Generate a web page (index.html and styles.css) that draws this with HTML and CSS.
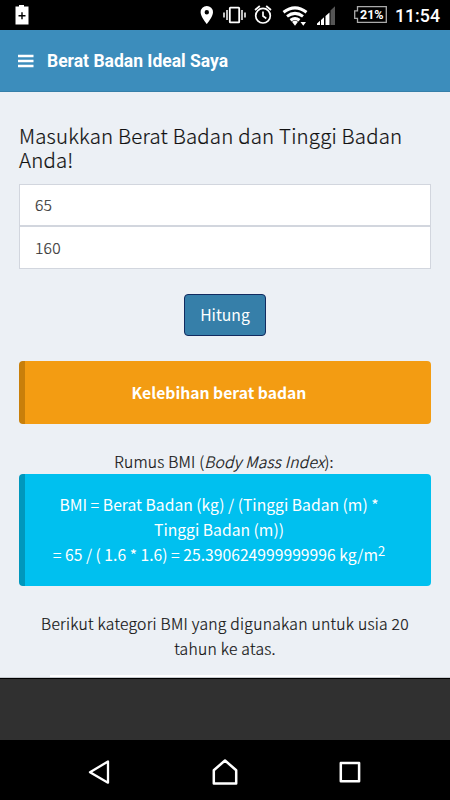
FILE: index.html
```html
<!DOCTYPE html>
<html lang="id">
<head>
    <meta charset="UTF-8">
    <meta name="viewport" content="width=device-width, initial-scale=1.0">
    <title>Berat Badan Ideal Saya</title>
    <link rel="stylesheet" href="styles.css">
</head>
<body>
    <div class="status-bar">
        <svg class="icon-saver" width="14" height="20" viewBox="0 0 14 20">
            <path fill="#fff" d="M4 0h5v1.500h4.500v18H.5v-18H4z"/>
            <path stroke="#000" stroke-width="1.400" d="M3.500 10.700h7M7 7.200v7"/>
        </svg>
        <svg class="status-icons" width="250" height="30" viewBox="190 0 250 30">
            <path fill="#fff" fill-rule="evenodd" d="M206.800 6a6.200 6.200 0 0 0-6.200 6.200c0 4.600 6.200 11.800 6.200 11.800s6.200-7.200 6.200-11.800A6.200 6.200 0 0 0 206.800 6zm0 4a2.200 2.200 0 1 1 0 4.400 2.200 2.200 0 0 1 0-4.400z"/>
            <g fill="none" stroke="#fff">
                <rect x="229.800" y="7.700" width="9.400" height="14.600" rx=".6" stroke-width="1.800"/>
                <path stroke-width="1.500" d="M227 10v10M224 12.500v5M242 10v10M245 12.500v5"/>
            </g>
            <g fill="none" stroke="#fff" stroke-width="1.700">
                <circle cx="263" cy="15.700" r="7.300"/>
                <path d="M263 11.500v4.500l3.300 2.500M255 10l4.800-4M271 10l-4.800-4"/>
            </g>
            <g fill="none" stroke="#fff" stroke-width="3">
                <path d="M283.500 12.300q11.500-8.800 23 0M287 16.400q8-6 16 0M290.500 20.200q4.500-3.200 9 0"/>
            </g>
            <path fill="#fff" d="M292 21.700q3-2 6 0l-3 4zM300.500 22h5.500l-2.700 3.700z"/>
            <path fill="#fff" d="M317 25v-1.500l3-2.700V25zM321 25v-5l3-2.800V25zM325.500 25v-9l4-3.400V25z"/>
            <path fill="#555" d="M330.500 25V10.500L335 6.300V25z"/>
            <path fill="none" stroke="#aaa" stroke-width="1.300" d="M357.500 6.700h28.800v15.600h-28.800v-4h-2.800v-7.500h2.800z"/>
        </svg>
        <span class="battery">21%</span>
        <span class="clock">11:54</span>
    </div>

    <header class="navbar">
        <svg width="16" height="14" viewBox="0 0 16 14">
            <path stroke="#fff" stroke-width="2.600" d="M0 2h15.500M0 7h15.500M0 12h15.500"/>
        </svg>
        <h1 class="brand">Berat Badan Ideal Saya</h1>
    </header>

    <main class="content">
        <h2 class="title">Masukkan Berat Badan dan Tinggi Badan Anda!</h2>
        <input class="form-control" type="text" value="65">
        <input class="form-control" type="text" value="160">
        <button class="btn">Hitung</button>

        <div class="callout callout-warning">Kelebihan berat badan</div>

        <p class="formula-label">Rumus BMI (<i>Body Mass Index</i>):</p>
        <div class="callout callout-info">
            BMI = Berat Badan (kg) / (Tinggi Badan (m) * Tinggi Badan (m))<br>
            <span class="result">= 65 / ( 1.6 * 1.6) = 25.390624999999996 kg/m<sup>2</sup></span>
        </div>

        <p class="category">Berikut kategori BMI yang digunakan untuk usia 20 tahun ke atas.</p>
        <div class="table-top"></div>
    </main>

    <div class="ad-space"></div>

    <nav class="nav-keys">
        <svg width="22" height="26" viewBox="0 0 22 26">
            <path fill="none" stroke="#fff" stroke-width="2.300" stroke-linejoin="round" d="M2 13.200L20 2.500v21.200z"/>
        </svg>
        <svg width="26" height="26" viewBox="0 0 26 26">
            <path fill="none" stroke="#fff" stroke-width="2.500" stroke-linejoin="round" d="M1.800 24.500V11.200L13 1.500l11.200 9.700v13.300z"/>
        </svg>
        <svg width="22" height="26" viewBox="0 0 22 26">
            <rect x="1.800" y="4" width="18.300" height="18.300" fill="none" stroke="#fff" stroke-width="2.500" stroke-linejoin="round"/>
        </svg>
    </nav>
</body>
</html>
```

FILE: styles.css
```css
* {
    box-sizing: border-box;
}

body {
    margin: 0;
    width: 450px;
    height: 800px;
    overflow: hidden;
    font-family: "Noto Sans CJK SC", "Open Sans", sans-serif;
    font-size: 15.7px;
    line-height: 25px;
    font-weight: 300;
    color: #111;
    background-color: #000;
}

.status-bar {
    position: relative;
    height: 30px;
    background-color: #000;
    color: #fff;
    font-family: Roboto, sans-serif;
}

.status-bar svg {
    display: block;
}

.icon-saver {
    position: absolute;
    left: 15px;
    top: 5px;
}

.status-icons {
    margin-left: 190px;
}

.battery {
    position: absolute;
    left: 360px;
    top: 2px;
    font-size: 12.5px;
    font-weight: 700;
}

.clock {
    position: absolute;
    right: 10px;
    top: 3px;
    font-size: 17.8px;
    font-weight: 500;
}

.navbar {
    display: flex;
    align-items: center;
    gap: 13px;
    height: 62px;
    padding: 1px 0 0 18px;
    background-color: #3c8dbc;
    border-bottom: 1px solid #367fa9;
}

.brand {
    margin: 0;
    color: #fff;
    font-family: Roboto, sans-serif;
    font-size: 17.5px;
    font-weight: 700;
}

.content {
    height: 586px;
    padding: 31px 19px 0;
    overflow: hidden;
    text-align: center;
    background-color: #ecf0f5;
    border-bottom: 1px solid #c5c9ce;
}

.title {
    margin: 0 0 13px;
    font-size: 20.4px;
    font-weight: 300;
    line-height: 24px;
    letter-spacing: 0.2px;
    text-align: left;
    -webkit-text-stroke: 0.2px #111;
}

.form-control {
    display: block;
    width: 100%;
    height: 42px;
    padding: 0 15px 1px;
    font: inherit;
    letter-spacing: 0.2px;
    color: #333;
    background-color: #fff;
    border: 1px solid #d2d6de;
    border-radius: 0;
    -webkit-text-stroke: 0.2px #333;
}

.form-control + .form-control {
    height: 43px;
}

.btn {
    display: block;
    width: 82px;
    height: 42px;
    margin: 25px auto;
    padding: 0 0 1px;
    font: inherit;
    font-weight: 400;
    color: #fff;
    background-color: #367fa9;
    border: 1px solid #122b60;
    border-radius: 4px;
}

.callout {
    padding: 19px 50px 19px 32px;
    color: #fff;
    font-weight: 400;
    border-left: 6px solid;
    border-radius: 4px;
}

.callout-warning {
    font-weight: 700;
    background-color: #f39c12;
    border-left-color: #c87f0a;
}

.callout-info {
    height: 112px;
    padding-top: 18px;
    background-color: #00c0ef;
    border-left-color: #0097bc;
}

.formula-label {
    margin: 25px 2px 0 0;
    letter-spacing: 0.19px;
    -webkit-text-stroke: 0.2px #111;
}

.result {
    margin: 0 -5px;
    white-space: nowrap;
}

sup {
    position: relative;
    top: -5px;
    font-size: 83%;
    line-height: 0;
    vertical-align: baseline;
}

.category {
    margin: 25px 0 14px;
    padding: 0 18px;
    letter-spacing: 0.26px;
    -webkit-text-stroke: 0.2px #111;
}

.table-top {
    width: 350px;
    height: 20px;
    margin: 0 auto;
    background-color: #fff;
}

.ad-space {
    height: 62px;
    background-color: #303030;
    border-top: 1px solid #000;
}

.nav-keys {
    display: flex;
    align-items: center;
    justify-content: space-between;
    height: 60px;
    padding: 3px 89px 0 88px;
    background-color: #000;
}
```
